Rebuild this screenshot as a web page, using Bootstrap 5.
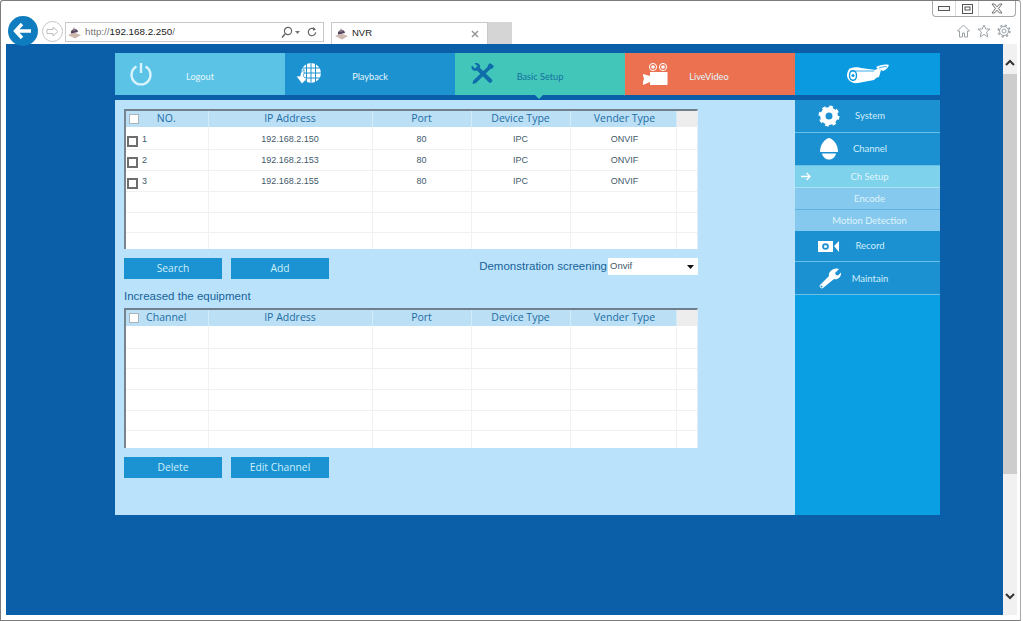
<!DOCTYPE html>
<html lang="en">
<head>
  <meta charset="UTF-8">
  <meta name="viewport" content="width=device-width, initial-scale=1.0">
  <title>NVR</title>
  <link href="https://cdn.jsdelivr.net/npm/bootstrap@5.3.3/dist/css/bootstrap.min.css" rel="stylesheet">
  <style>
    html, body { height: 621px; overflow: hidden; }
    body { background: #fff; font-family: "Open Sans", "Liberation Sans", sans-serif; }

    /* browser frame */
    .ie-win { height: 621px; width: 1021px; border: 1px solid #7c7c7c; border-right-color: #a8a8a8; border-radius: 3px 3px 0 0; padding: 0 3px 5px 5px; background: #fff; }
    .ie-top { height: 43px; }
    .ie-left { padding-top: 15px; padding-left: 2px; }
    .ie-back { width: 30px; height: 30px; border-radius: 50%; background: #0f7cbf; margin-right: 4px; z-index: 2; }
    .ie-fwd { width: 21px; height: 21px; border-radius: 50%; border: 1px solid #c6c6c6; margin: 5px 2px 0 0; }
    .ie-addr { width: 259px; height: 20px; margin-top: 6px; border: 1px solid #c9c9c9; padding: 0 4px 0 2px; font-family: "Liberation Sans", sans-serif; font-size: 9.8px; color: #777; margin-right: 7px; }
    .ie-addr b { font-weight: 400; color: #222; }
    .ie-tab { width: 157px; height: 22px; margin-top: 6px; border: 1px solid #c9c9c9; border-bottom: 0; padding: 0 4px 0 3px; font-family: "Liberation Sans", sans-serif; font-size: 9.5px; color: #222; }
    .ie-newtab { width: 24px; height: 22px; margin-top: 6px; background: #d5d5d5; }
    .ie-caps { width: 84px; height: 16px; margin-right: 1px; border: 1px solid #a9a9a9; border-top: 0; border-radius: 0 0 4px 4px; }
    .ie-caps span { border-right: 1px solid #d9d9d9; height: 100%; }
    .ie-caps span.cap-small { width: 23px; }
    .ie-tools { width: 54px; margin-top: 7px; margin-right: 6px; }

    /* page area */
    .view-wrap { height: 571px; }
    .page-area { width: 997px; background: #0b5ea8; padding: 9px 0 0 109px; }
    .scroll-rail { width: 14px; background: #f1f1f1; }
    .scroll-arrow { height: 30px; padding-top: 6px; }
    .scroll-thumb { height: 400px; background: #cdcdcd; }
    .scroll-down { height: 141px; padding-bottom: 15px; }

    /* top tabs */
    .top-tabs { width: 825px; height: 42px; margin-bottom: 5px; }
    .top-tab { width: 170px; height: 42px; color: #e3f6fc; font-family: Lato, "Open Sans", sans-serif; font-size: 9.2px; text-decoration: none; position: relative; }
    .top-tab:hover { color: #e3f6fc; }
    .tab-logout { background: #5bc4e6; }
    .tab-playback { background: #1c92d1; }
    .tab-setup { background: #43c6ba; color: #13719f; }
    .tab-setup:hover { color: #13719f; }
    .tab-setup::after { content: ""; position: absolute; left: 80px; top: 42px; border: 4px solid transparent; border-top-color: #43c6ba; border-bottom: 0; }
    .tab-live { background: #eb7150; }
    .tab-logo { width: 145px; background: #0a9ae0; }
    .tab-ico { width: 26px; margin-left: 13px; flex: none; }
    .ico-play { margin-left: 11px; }
    .ico-setup { margin-left: 15px; }
    .ico-live { margin-left: 16px; width: 28px; }
    .tab-text { width: 92px; text-align: center; padding-top: 6px; }
    .ico-play + .tab-text { width: 96px; }
    .ico-setup + .tab-text { width: 88px; }
    .ico-live + .tab-text { width: 80px; }

    /* main panel */
    .main-row { width: 825px; height: 415px; }
    .content-pane { width: 680px; background: #bae3fb; padding: 9px 0 0 9px; }
    .nvr-box { width: 574px; height: 140px; overflow: hidden; background: #fff; border-top: 2px solid #6f7f8b; border-left: 2px solid #78858f; border-right: 1px solid #e2eef5; }
    .nvr-grid.table { --bs-table-bg: transparent; margin: 0; width: 572px; table-layout: fixed; border-collapse: collapse; font-size: 9px; font-family: "Liberation Sans", sans-serif; color: #3f5a6b; }
    .nvr-grid.table th { height: 16px; padding: 0 0 1px; background: #bbdff4; border: 0; border-right: 1px solid #d3ecf9; color: #1d6ea6; font-family: "Open Sans", sans-serif; font-size: 10.5px; font-weight: 400; text-align: center; line-height: 15px; }
    .nvr-grid.table th.blank-head { background: #ededed; border-right: 0; }
    .nvr-grid.table td { height: 20.7px; padding: 0; border: 0; border-right: 1px solid #eef2f4; border-bottom: 1px solid #eef2f4; text-align: center; line-height: 20px; color: #3f5a6b; vertical-align: middle; }
    .nvr-grid.table tbody tr:first-child td { height: 22px; padding-top: 2px; }
    .nvr-grid.table td.no-cell { text-align: left; padding-left: 1px; }
    .nvr-grid.table th:nth-child(5), .nvr-grid.table td:nth-child(5) { padding-left: 3px; }
    .head-cell { padding-left: 3px; padding-right: 14px; }
    .head-check, .row-check { appearance: none; display: inline-block; margin: 0; background: #fff; flex: none; }
    .head-check { width: 10px; height: 10px; border: 1px solid #a8b4bb; }
    .row-check { width: 11px; height: 11px; border: 2px solid #6e6e6e; margin-right: 4px; vertical-align: -5px; }
    .btn-nvr { width: 98px; height: 21px; padding: 0; border: 0; border-radius: 0; background: #1b92d1; color: #cdeffc; font-size: 10.3px; line-height: 21px; }
    .btn-nvr:hover { background: #1b92d1; color: #cdeffc; }
    .tool-row { width: 574px; height: 21px; margin: 9px 0 0; gap: 9px; }
    .filter-label { font-family: "Liberation Sans", sans-serif; font-size: 11.5px; color: #17629a; white-space: nowrap; margin-right: 1px; line-height: 17px; }
    .filter-select { width: 90px; height: 17px; min-height: 0; padding: 0 0 0 2px; border: 0; border-radius: 0; font-family: "Liberation Sans", sans-serif; font-size: 9.5px; color: #3f5a6b; background-color: #fff; background-position: right 4px center; background-size: 7px 4px; background-image: url("data:image/svg+xml,%3csvg xmlns='http://www.w3.org/2000/svg' viewBox='0 0 7 4'%3e%3cpath d='M0 0h7L3.5 4z' fill='%23111'/%3e%3c/svg%3e"); }
    .sub-title { height: 29px; padding-top: 9px; font-family: "Liberation Sans", sans-serif; font-size: 11.5px; color: #17629a; line-height: 16px; }

    /* right menu */
    .side-menu { width: 145px; background: #0a9ee3; color: #cfeefb; font-family: Lato, "Open Sans", sans-serif; font-size: 9.5px; }
    .side-item { height: 33px; background: #1c91d1; border-bottom: 1px solid #6cbfe8; color: #cfeefb; text-decoration: none; }
    .side-item:hover { color: #cfeefb; }
    .side-short { height: 31px; padding-top: 1px; }
    .side-low { padding-top: 2px; }
    .side-ico { width: 24px; margin-left: 22px; flex: none; }
    .side-text { width: 58px; text-align: center; white-space: nowrap; }
    .side-sub { height: 22px; background: #86c9ee; padding: 1px 0 0 4px; color: #dff4fb; border-bottom: 1px solid #5fb1e0; text-decoration: none; position: relative; }
    .side-sub:hover { color: #dff4fb; }
    .side-sub.is-on { background: #7fd2ec; border-bottom-color: #a9e2f3; }
    .side-sub.sub-last { height: 21px; border-bottom: 0; }
    .side-arrow { position: absolute; left: 6px; top: 6px; }
  </style>
</head>
<body>
  <div class="ie-win d-flex flex-column">
    <!-- barra del navegador -->
    <div class="ie-top d-flex justify-content-between">
      <div class="ie-left d-flex align-items-start">
        <div class="ie-back d-flex align-items-center justify-content-center">
          <svg width="20" height="18" viewBox="0 0 20 18"><path d="M9 2 2.500 9 9 16M3 9h15" fill="none" stroke="#fff" stroke-width="3.400"/></svg>
        </div>
        <div class="ie-fwd d-flex align-items-center justify-content-center">
          <svg width="13" height="11" viewBox="0 0 13 11"><path d="M7 1l5 4.500-5 4.500V7.500H1v-4h6z" fill="none" stroke="#bdbdbd"/></svg>
        </div>
        <div class="ie-addr d-flex align-items-center">
          <svg class="me-1" width="13" height="13" viewBox="0 0 13 13"><path d="M0 9l6-2.500 7 2.500-6 3.500z" fill="#cdb9b0"/><path d="M3 7.500a3.500 3.500 0 0 1 7-1.500z" fill="#54435c"/><path d="M6 1l1.500 4h-3z" fill="#8a7a88"/></svg>
          <span>http://<b>192.168.2.250</b>/</span>
          <svg class="ms-auto" width="38" height="13" viewBox="0 0 38 13"><circle cx="7" cy="5" r="3.600" fill="none" stroke="#666" stroke-width="1.200"/><path d="M4 8 1 11.500" stroke="#666" stroke-width="1.500"/><path d="M14 5h5l-2.500 3z" fill="#777"/><path d="M33.500 3.300a3.700 3.700 0 1 0 1.200 3" fill="none" stroke="#666" stroke-width="1.200"/><path d="M32 1l3 2.500-3 1.200z" fill="#666"/></svg>
        </div>
        <div class="ie-tab d-flex align-items-center">
          <svg width="13" height="13" viewBox="0 0 13 13"><path d="M0 9l6-2.500 7 2.500-6 3.500z" fill="#cdb9b0"/><path d="M3 7.500a3.500 3.500 0 0 1 7-1.500z" fill="#54435c"/><path d="M6 1l1.500 4h-3z" fill="#8a7a88"/></svg>
          <span class="ms-1">NVR</span>
          <svg class="ms-auto me-1" width="8" height="8" viewBox="0 0 8 8"><path d="M1 1l6 6M7 1 1 7" stroke="#9a9a9a" stroke-width="1.600"/></svg>
        </div>
        <div class="ie-newtab"></div>
      </div>
      <div class="d-flex flex-column align-items-end">
        <div class="ie-caps d-flex">
          <span class="cap-small d-flex align-items-center justify-content-center"><svg width="12" height="6" viewBox="0 0 12 6"><rect x=".5" y=".5" width="11" height="4" fill="#f4f4f4" stroke="#555"/></svg></span>
          <span class="cap-small d-flex align-items-center justify-content-center"><svg width="11" height="10" viewBox="0 0 11 10"><rect x=".5" y=".5" width="10" height="9" fill="none" stroke="#555"/><rect x="3" y="3" width="5" height="3" fill="none" stroke="#555"/></svg></span>
          <span class="d-flex flex-fill align-items-center justify-content-center border-0"><svg width="12" height="11" viewBox="0 0 12 11"><path d="M1 1h2.500L6 3.800 8.500 1H11L7.600 5.500 11 10H8.500L6 7.200 3.500 10H1L4.400 5.500z" fill="#f4f4f4" stroke="#555" stroke-width=".8"/></svg></span>
        </div>
        <div class="ie-tools d-flex justify-content-between">
          <svg width="13" height="14" viewBox="0 0 13 14"><path d="M6.500 1 .5 7h2v6h3V9h2v4h3V7h2z" fill="none" stroke="#9aa3a8"/></svg>
          <svg width="14" height="14" viewBox="0 0 14 14"><path d="M7 1l1.800 4H13L9.600 8l1.200 5L7 10.400 3.200 13l1.200-5L1 5h4.200z" fill="none" stroke="#9aa3a8"/></svg>
          <svg width="14" height="14" viewBox="0 0 14 14"><circle cx="7" cy="7" r="4.500" fill="none" stroke="#9aa3a8"/><circle cx="7" cy="7" r="5.800" fill="none" stroke="#9aa3a8" stroke-width="1.600" stroke-dasharray="2.200 2.350"/><circle cx="7" cy="7" r="2" fill="none" stroke="#9aa3a8"/></svg>
        </div>
      </div>
    </div>

    <div class="view-wrap d-flex">
      <div class="page-area">
        <!-- menu superior -->
        <div class="top-tabs d-flex">
          <a href="#" class="top-tab tab-logout d-flex align-items-center">
            <svg class="tab-ico" height="24" viewBox="0 0 26 24"><path d="M8.500 4.500a9.500 9.500 0 1 0 9 0" fill="none" stroke="#d8f3fb" stroke-width="2.400"/><path d="M13 1v10" stroke="#d8f3fb" stroke-width="2.400"/></svg>
            <span class="tab-text">Logout</span>
          </a>
          <a href="#" class="top-tab tab-playback d-flex align-items-center">
            <svg class="tab-ico ico-play" height="24" viewBox="0 0 26 24"><circle cx="15" cy="11" r="10" fill="#fff"/><path d="M5 6h20M5 11h20M5 16h20M10.500 1v20M15 1v20M19.500 1v20" stroke="#1c92d1" stroke-width="1"/><path d="M0 14h4c.2-3 1.500-5 4-6.500V12c-1 1-1 2 0 3l3 1.500L6 22z" fill="#fff" stroke="#1c92d1" stroke-width=".8"/></svg>
            <span class="tab-text">Playback</span>
          </a>
          <a href="#" class="top-tab tab-setup d-flex align-items-center">
            <svg class="tab-ico ico-setup" height="24" viewBox="0 0 26 24"><path d="M2 3.500 5 6.500 7.500 4 4.500 1.500C8 0 11 3 10 6l12 11.500c1.500 1.500-1.500 4.500-3 3L7 8.500C4 10 0 7 2 3.500z" fill="#0f6ea9"/><path d="M20 1l4 3-1.500 2.500-2 .5L6 21l-3 1-.5-.5.8-3L17.500 5l.5-2z" fill="#0f6ea9"/></svg>
            <span class="tab-text">Basic Setup</span>
          </a>
          <a href="#" class="top-tab tab-live d-flex align-items-center">
            <svg class="tab-ico ico-live" height="24" viewBox="0 0 28 24"><circle cx="12" cy="5" r="3.600" fill="none" stroke="#fff" stroke-width="1"/><circle cx="12" cy="5" r="1.800" fill="#fff"/><circle cx="22" cy="5" r="3.600" fill="none" stroke="#fff" stroke-width="1"/><circle cx="22" cy="5" r="1.800" fill="#fff"/><path d="M9 10h17.500v13H9v-3l-7 3v-3l1-3.500-1-3V12l7 2z" fill="#fff"/></svg>
            <span class="tab-text">LiveVideo</span>
          </a>
          <div class="top-tab tab-logo d-flex align-items-center justify-content-center">
            <svg width="44" height="20" viewBox="0 0 44 20"><path d="M3 5c3-2 10-2 12-1l15 2 2 6-4 4-16 3C6 20 1 16 1 11c0-2 1-4 2-6z" fill="#fff"/><ellipse cx="7" cy="11.500" rx="4.200" ry="5.500" fill="#0a9ae0"/><ellipse cx="7" cy="11.500" rx="2.800" ry="4" fill="#fff"/><circle cx="7" cy="11.500" r="1.500" fill="#0a9ae0"/><path d="M4 7h25" stroke="#0a9ae0" stroke-width=".8"/><path d="M28 7l4-3 3 2-2 7-4 1z" fill="#fff"/><path d="M30 3c4-2 9-3 13-2-1 3-3 5-6 6-2-1-5-2-7-4z" fill="#fff"/><path d="M33 4c3-1 6-2 8-1" stroke="#0a9ae0" fill="none" stroke-width=".8"/></svg>
          </div>
        </div>

        <div class="main-row d-flex">
          <div class="content-pane">
            <div class="nvr-box">
              <table class="table nvr-grid">
                <colgroup><col style="width:82px"><col style="width:164px"><col style="width:99px"><col style="width:99px"><col style="width:106px"><col></colgroup>
                <thead>
                  <tr><th><div class="head-cell d-flex align-items-center"><input type="checkbox" class="head-check"><span class="flex-fill">NO.</span></div></th><th>IP Address</th><th>Port</th><th>Device Type</th><th>Vender Type</th><th class="blank-head"></th></tr>
                </thead>
                <tbody id="cuerpo-equipos"></tbody>
              </table>
            </div>
            <div class="tool-row d-flex align-items-start">
              <button class="btn btn-nvr">Search</button>
              <button class="btn btn-nvr">Add</button>
              <div class="ms-auto d-flex">
                <span class="filter-label">Demonstration screening</span>
                <select class="form-select filter-select"><option>Onvif</option></select>
              </div>
            </div>
            <div class="sub-title">Increased the equipment</div>
            <div class="nvr-box">
              <table class="table nvr-grid">
                <colgroup><col style="width:82px"><col style="width:164px"><col style="width:99px"><col style="width:99px"><col style="width:106px"><col></colgroup>
                <thead>
                  <tr><th><div class="head-cell d-flex align-items-center"><input type="checkbox" class="head-check"><span class="flex-fill">Channel</span></div></th><th>IP Address</th><th>Port</th><th>Device Type</th><th>Vender Type</th><th class="blank-head"></th></tr>
                </thead>
                <tbody id="cuerpo-canales"></tbody>
              </table>
            </div>
            <div class="tool-row d-flex align-items-start">
              <button class="btn btn-nvr">Delete</button>
              <button class="btn btn-nvr">Edit Channel</button>
            </div>
          </div>

          <!-- menu lateral -->
          <div class="side-menu d-flex flex-column">
            <a href="#" class="side-item d-flex align-items-center">
              <svg class="side-ico" height="22" viewBox="0 0 24 22"><circle cx="12" cy="11" r="6.200" fill="none" stroke="#fff" stroke-width="5.400"/><circle cx="12" cy="11" r="9.200" fill="none" stroke="#fff" stroke-width="2.600" stroke-dasharray="3.600 3.625"/></svg>
              <span class="side-text">System</span>
            </a>
            <a href="#" class="side-item d-flex align-items-center">
              <svg class="side-ico" height="22" viewBox="0 0 24 22"><path d="M3 14C3 6 8 1 12 0c4 1 9 6 9 14z" fill="#fff"/><path d="M5 15.500h14c-1 4-4 6-7 6s-6-2-7-6z" fill="#fff"/></svg>
              <span class="side-text">Channel</span>
            </a>
            <a href="#" class="side-sub is-on d-flex align-items-center justify-content-center">
              <svg class="side-arrow" width="10" height="9" viewBox="0 0 10 9"><path d="M5.500 1 9 4.500 5.500 8M9 4.500H0" fill="none" stroke="#fff" stroke-width="1.300"/></svg>
              Ch Setup
            </a>
            <a href="#" class="side-sub d-flex align-items-center justify-content-center">Encode</a>
            <a href="#" class="side-sub sub-last d-flex align-items-center justify-content-center">Motion Detection</a>
            <a href="#" class="side-item side-short d-flex align-items-center">
              <svg class="side-ico" height="13" viewBox="0 0 24 13"><path d="M1 1h15v11H1zM17 6l5-5v11z" fill="#fff"/><circle cx="8.500" cy="6.500" r="3.300" fill="#1c91d1"/><circle cx="8.500" cy="6.500" r="1.500" fill="#fff"/></svg>
              <span class="side-text">Record</span>
            </a>
            <a href="#" class="side-item side-low d-flex align-items-center">
              <svg class="side-ico" height="22" viewBox="0 0 24 22"><path d="M22 1l-4 4 1 2 2 .5 3-3c.5 4-3 8-7 6.500L6 20c-1.500 1.500-4.500-1-3-3l9-9C11 4 16 0 20 .5z" fill="#fff"/><circle cx="4.500" cy="18.500" r="1" fill="#1c91d1"/></svg>
              <span class="side-text">Maintain</span>
            </a>
          </div>
        </div>
      </div>

      <!-- scrollbar -->
      <div class="scroll-rail">
        <div class="scroll-arrow d-flex align-items-center justify-content-center">
          <svg width="10" height="7" viewBox="0 0 10 7"><path d="M1 6l4-4 4 4" fill="none" stroke="#333" stroke-width="2"/></svg>
        </div>
        <div class="scroll-thumb"></div>
        <div class="scroll-down d-flex align-items-end justify-content-center">
          <svg width="10" height="7" viewBox="0 0 10 7"><path d="M1 1l4 4 4-4" fill="none" stroke="#333" stroke-width="2"/></svg>
        </div>
      </div>
    </div>
  </div>

  <script src="https://cdn.jsdelivr.net/npm/bootstrap@5.3.3/dist/js/bootstrap.bundle.min.js"></script>
  <script>
    const equipos = [
      { no: 1, ip: '192.168.2.150' },
      { no: 2, ip: '192.168.2.153' },
      { no: 3, ip: '192.168.2.155' }
    ];

    function filasVacias(n) {
      return '<tr><td></td><td></td><td></td><td></td><td></td><td></td></tr>'.repeat(n);
    }

    const filas = equipos.map(e => `
      <tr>
        <td class="no-cell"><input type="checkbox" class="row-check">${e.no}</td>
        <td>${e.ip}</td><td>80</td><td>IPC</td><td>ONVIF</td><td></td>
      </tr>`).join('');

    document.getElementById('cuerpo-equipos').innerHTML = filas + filasVacias(3);
    document.getElementById('cuerpo-canales').innerHTML = filasVacias(6);
  </script>
</body>
</html>
